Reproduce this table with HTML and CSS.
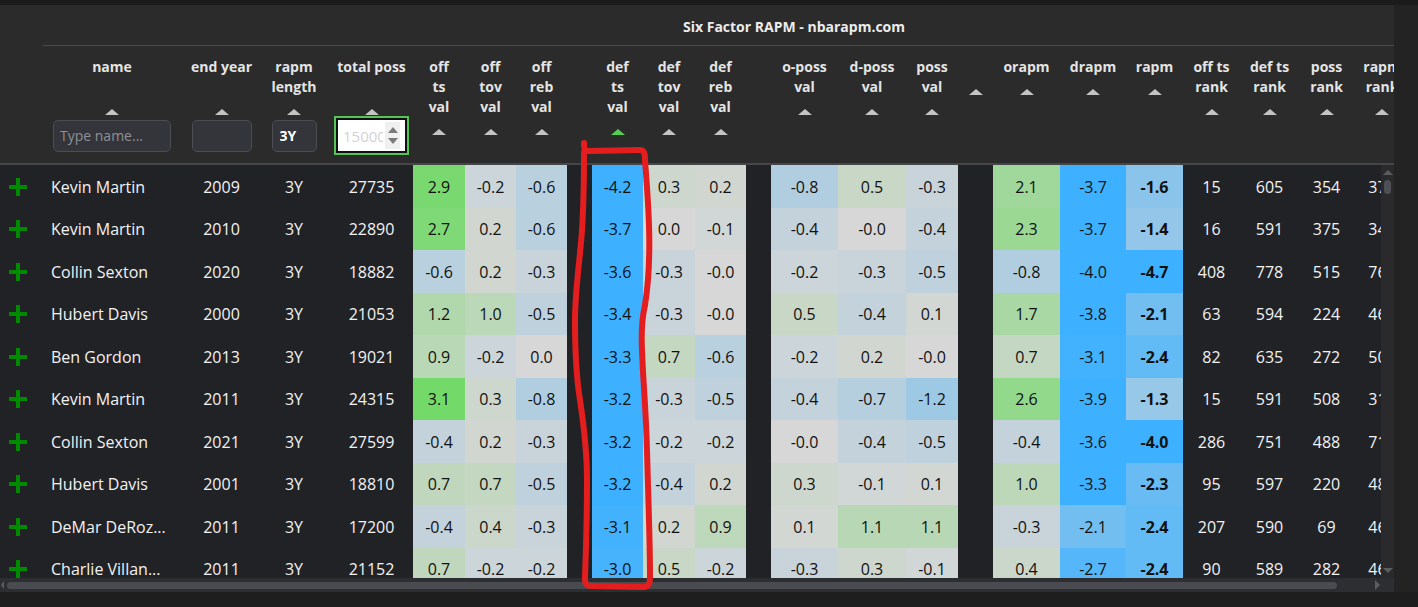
FILE: index.html
```html
<!DOCTYPE html>
<html lang="en">
<head>
<meta charset="utf-8">
<title>Six Factor RAPM - nbarapm.com</title>
<link rel="stylesheet" href="styles.css">
</head>
<body>
<div class="topbar"></div>
<div class="app">
  <main class="panel">
    <div class="title">Six Factor RAPM - nbarapm.com</div>
    <div class="thead">
      <div class="thead-clip">
        <div class="grid hrow">
          <div class="th th-plus"></div>
          <div class="th th-name"><div class="lbl two">name</div><span class="sort"></span><div class="slot"><input class="filter f-name" type="text" placeholder="Type name..."></div></div>
          <div class="th"><div class="lbl two">end year</div><span class="sort"></span><div class="slot"><input class="filter f-year" type="text"></div></div>
          <div class="th"><div class="lbl">rapm<br>length</div><span class="sort"></span><div class="slot"><input class="filter f-len" type="text" value="3Y"></div></div>
          <div class="th"><div class="lbl two">total poss</div><span class="sort"></span><div class="slot"><div class="numbox"><div class="numbox-in"><input class="num-input" type="text" placeholder="15000"><span class="spin"><i class="up"></i><i class="down"></i></span></div></div></div></div>
          <div class="th"><div class="lbl">off<br>ts<br>val</div><span class="sort"></span></div>
          <div class="th"><div class="lbl">off<br>tov<br>val</div><span class="sort"></span></div>
          <div class="th"><div class="lbl">off<br>reb<br>val</div><span class="sort"></span></div>
          <div class="th"></div>
          <div class="th"><div class="lbl">def<br>ts<br>val</div><span class="sort active"></span></div>
          <div class="th"><div class="lbl">def<br>tov<br>val</div><span class="sort"></span></div>
          <div class="th"><div class="lbl">def<br>reb<br>val</div><span class="sort"></span></div>
          <div class="th"></div>
          <div class="th"><div class="lbl">o-poss<br>val</div><span class="sort"></span></div>
          <div class="th"><div class="lbl">d-poss<br>val</div><span class="sort"></span></div>
          <div class="th"><div class="lbl">poss<br>val</div><span class="sort"></span></div>
          <div class="th"><div class="lbl">&nbsp;</div><span class="sort"></span></div>
          <div class="th"><div class="lbl">orapm</div><span class="sort"></span></div>
          <div class="th"><div class="lbl">drapm</div><span class="sort"></span></div>
          <div class="th"><div class="lbl">rapm</div><span class="sort"></span></div>
          <div class="th"><div class="lbl">off ts<br>rank</div><span class="sort"></span></div>
          <div class="th"><div class="lbl">def ts<br>rank</div><span class="sort"></span></div>
          <div class="th"><div class="lbl">poss<br>rank</div><span class="sort"></span></div>
          <div class="th"><div class="lbl">rapm<br>rank</div><span class="sort"></span></div>
        </div>
      </div>
    </div>
    <div class="tbody">
      <div class="tbody-clip">
        <div id="rows" class="grid rows"></div>
      </div>
      <div class="vscroll">
        <i class="arr-up"></i>
        <span class="vthumb"></span>
        <span class="vspace"></span>
        <i class="arr-down"></i>
      </div>
    </div>
    <div class="hscroll">
      <i class="arr-left"></i>
      <span class="hthumb"></span>
      <span class="hspace"></span>
      <i class="arr-right"></i>
    </div>
  </main>
  <div class="gutter"></div>
</div>
<svg class="annot" width="1418" height="607" viewBox="0 0 1418 607" aria-hidden="true">
  <path d="M 584 143 C 584 148, 584 151, 589 151 L 640 150 C 644 150, 645 153, 645 160 C 646 175, 648 195, 649 225 C 650 255, 649 280, 645 305 C 642 318, 641 330, 642 350 C 643 380, 646 410, 647 450 C 648 490, 650 540, 650 575 C 650 584, 649 587, 643 587 L 592 586 C 586 586, 585 584, 585 578 C 586 550, 587 510, 587 480 C 587 450, 583 420, 580 400 C 576 375, 575 350, 575 320 C 575 290, 580 260, 582 230 C 584 200, 584 170, 584 152" />
</svg>
<script src="app.js"></script>
</body>
</html>
```

FILE: styles.css
```css
* { box-sizing: border-box; }

html, body {
  margin: 0;
  padding: 0;
}

body {
  width: 1418px;
  height: 607px;
  overflow: hidden;
  background: #1e1e1e;
  font-family: "Open Sans", "Noto Sans", "DejaVu Sans", sans-serif;
  position: relative;
}

.topbar {
  height: 5px;
  background: #1b1b1b;
}

.app {
  display: flex;
  height: 587px;
}

.panel {
  width: 1394px;
  height: 587px;
  background: #2b2b2b;
  display: flex;
  flex-direction: column;
}

.gutter {
  flex: 1;
  background: #232323;
}

.title {
  height: 40px;
  padding-top: 12px;
  padding-left: 194px;
  text-align: center;
  color: #ececec;
  font-weight: 700;
  font-size: 14px;
  line-height: 20px;
}

.grid {
  display: grid;
  grid-template-columns: 43px 142px 73px 72px 83px 52px 51px 51px 25px 51px 52px 51px 25px 67px 68px 52px 35px 67px 66px 57px 57px 59px 55px 56px;
  width: 1410px;
}

/* ---------- header ---------- */
.thead {
  height: 120px;
  border-bottom: 2px solid #45464a;
}

.thead-clip {
  width: 1394px;
  overflow: hidden;
}

.hrow {
  height: 118px;
}

.th {
  display: flex;
  flex-direction: column;
  align-items: center;
  padding-top: 11px;
  border-top: 1px solid #4a4a4a;
  color: #e4e4e4;
  font-weight: 700;
  font-size: 14px;
  line-height: 20px;
  text-align: center;
  white-space: nowrap;
}

.th-plus {
  border-top-color: transparent;
}

.th-name {
  padding-right: 4px;
}

.lbl.two {
  min-height: 40px;
}

.sort {
  display: block;
  width: 0;
  height: 0;
  margin-top: 12px;
  border-left: 7px solid transparent;
  border-right: 7px solid transparent;
  border-bottom: 6px solid #c4c4c4;
}

.sort.active {
  border-bottom-color: #52d052;
}

.slot {
  height: 39px;
  margin-top: 1px;
  display: flex;
  align-items: center;
}

.filter {
  height: 32px;
  background: #33353a;
  border: 1px solid #4b4d53;
  border-radius: 5px;
  color: #ffffff;
  font-family: "Open Sans", "Noto Sans", sans-serif;
  font-size: 14px;
  padding: 0 6px;
  outline: none;
}

.filter::placeholder {
  color: #8d9096;
}

.f-name { width: 118px; }
.f-year { width: 60px; }
.f-len {
  width: 45px;
  font-weight: 700;
  padding: 0 7px;
}

.numbox {
  width: 75px;
  height: 39px;
  border: 2px solid #56c456;
  display: flex;
}

.numbox-in {
  flex: 1;
  display: flex;
  align-items: center;
  background: #ffffff;
  border: 2px solid #111111;
  padding-left: 5px;
  overflow: hidden;
}

.num-input {
  width: 40px;
  min-width: 0;
  border: 0;
  padding: 0;
  background: transparent;
  font-family: "Open Sans", "Noto Sans", sans-serif;
  font-size: 15px;
  outline: none;
}

.num-input::placeholder {
  color: #d2d2d2;
}

.spin {
  width: 15px;
  height: 27px;
  margin-left: 2px;
  background: #f0f0f0;
  display: flex;
  flex-direction: column;
  align-items: center;
  justify-content: center;
  gap: 5px;
}

.spin i {
  display: block;
  width: 0;
  height: 0;
  border-left: 5px solid transparent;
  border-right: 5px solid transparent;
}

.spin .up { border-bottom: 6px solid #7a7a7a; }
.spin .down { border-top: 6px solid #7a7a7a; }

/* ---------- body ---------- */
.tbody {
  display: flex;
  height: 413px;
}

.tbody-clip {
  width: 1381px;
  height: 413px;
  overflow: hidden;
  background: #212226;
}

.rows {
  grid-auto-rows: 42.5px;
}

.td {
  display: flex;
  align-items: center;
  justify-content: center;
  padding-top: 1px;
  color: #f2f2f2;
  font-size: 16px;
  white-space: nowrap;
  overflow: hidden;
}

.td.plus {
  justify-content: flex-start;
  padding-left: 8px;
}

.td.name {
  justify-content: flex-start;
  padding-left: 8px;
}

.td.val {
  color: #111111;
}

.td.strong {
  font-weight: 700;
}

.plus-icon {
  display: block;
}

.vscroll {
  width: 13px;
  background: #2a2a2c;
  display: flex;
  flex-direction: column;
  align-items: center;
  padding: 5px 0 5px;
}

.vspace { flex: 1; }

.arr-up, .arr-down, .arr-left, .arr-right {
  display: block;
  width: 0;
  height: 0;
}

.arr-up {
  border-left: 5px solid transparent;
  border-right: 5px solid transparent;
  border-bottom: 5px solid #5b5c60;
}

.arr-down {
  border-left: 5px solid transparent;
  border-right: 5px solid transparent;
  border-top: 5px solid #5b5c60;
}

.vthumb {
  display: block;
  width: 7px;
  height: 14px;
  margin-top: 5px;
  border-radius: 4px;
  background: #4f5055;
}

.hscroll {
  height: 14px;
  background: #2d2e32;
  display: flex;
  align-items: center;
  padding: 0 14px 0 1px;
}

.arr-left {
  border-top: 4px solid transparent;
  border-bottom: 4px solid transparent;
  border-right: 3px solid #5b5c60;
}

.arr-right {
  border-top: 5px solid transparent;
  border-bottom: 5px solid transparent;
  border-left: 5px solid #5b5c60;
}

.hthumb {
  display: block;
  width: 1330px;
  height: 7px;
  margin-left: 3px;
  border-radius: 4px;
  background: #4a4b50;
}

.hspace { flex: 1; }

/* ---------- annotation ---------- */
.annot {
  position: absolute;
  left: 0;
  top: 0;
  pointer-events: none;
}

.annot path {
  fill: none;
  stroke: #e41e1e;
  stroke-width: 6;
  stroke-linecap: round;
  stroke-linejoin: round;
}
```

FILE: app.js
```js
(function () {
  var data = [
    ["Kevin Martin", "2009", "3Y", "27735", ["2.9", "-0.2", "-0.6"], ["-4.2", "0.3", "0.2"], ["-0.8", "0.5", "-0.3"], ["2.1", "-3.7", "-1.6"], ["15", "605", "354", "372"]],
    ["Kevin Martin", "2010", "3Y", "22890", ["2.7", "0.2", "-0.6"], ["-3.7", "0.0", "-0.1"], ["-0.4", "-0.0", "-0.4"], ["2.3", "-3.7", "-1.4"], ["16", "591", "375", "348"]],
    ["Collin Sexton", "2020", "3Y", "18882", ["-0.6", "0.2", "-0.3"], ["-3.6", "-0.3", "-0.0"], ["-0.2", "-0.3", "-0.5"], ["-0.8", "-4.0", "-4.7"], ["408", "778", "515", "768"]],
    ["Hubert Davis", "2000", "3Y", "21053", ["1.2", "1.0", "-0.5"], ["-3.4", "-0.3", "-0.0"], ["0.5", "-0.4", "0.1"], ["1.7", "-3.8", "-2.1"], ["63", "594", "224", "466"]],
    ["Ben Gordon", "2013", "3Y", "19021", ["0.9", "-0.2", "0.0"], ["-3.3", "0.7", "-0.6"], ["-0.2", "0.2", "-0.0"], ["0.7", "-3.1", "-2.4"], ["82", "635", "272", "500"]],
    ["Kevin Martin", "2011", "3Y", "24315", ["3.1", "0.3", "-0.8"], ["-3.2", "-0.3", "-0.5"], ["-0.4", "-0.7", "-1.2"], ["2.6", "-3.9", "-1.3"], ["15", "591", "508", "311"]],
    ["Collin Sexton", "2021", "3Y", "27599", ["-0.4", "0.2", "-0.3"], ["-3.2", "-0.2", "-0.2"], ["-0.0", "-0.4", "-0.5"], ["-0.4", "-3.6", "-4.0"], ["286", "751", "488", "711"]],
    ["Hubert Davis", "2001", "3Y", "18810", ["0.7", "0.7", "-0.5"], ["-3.2", "-0.4", "0.2"], ["0.3", "-0.1", "0.1"], ["1.0", "-3.3", "-2.3"], ["95", "597", "220", "486"]],
    ["DeMar DeRoz...", "2011", "3Y", "17200", ["-0.4", "0.4", "-0.3"], ["-3.1", "0.2", "0.9"], ["0.1", "1.1", "1.1"], ["-0.3", "-2.1", "-2.4"], ["207", "590", "69", "466"]],
    ["Charlie Villan...", "2011", "3Y", "21152", ["0.7", "-0.2", "-0.2"], ["-3.0", "0.5", "-0.2"], ["-0.3", "0.3", "-0.1"], ["0.4", "-2.7", "-2.4"], ["90", "589", "282", "466"]]
  ];

  function colour(str, kg) {
    var v = parseFloat(str);
    var r, g, b;
    if (v > 0) {
      var t = Math.min(v, 5);
      r = 214 - kg * t;
      g = 215 + 0.6 * t;
      b = 214 - 1.1 * kg * t;
    } else {
      var u = Math.min(-v, 3.2) / 3.2;
      r = 214 - 153 * u;
      g = 215 - 38 * u;
      b = 214 + 41 * u;
    }
    return "rgb(" + Math.round(r) + "," + Math.round(g) + "," + Math.round(b) + ")";
  }

  var plusSvg = '<svg class="plus-icon" width="20" height="20" viewBox="0 0 20 20"><path d="M10 1V19M1 10H19" stroke="#008a00" stroke-width="4"/></svg>';

  var html = "";
  function cell(cls, text, bg) {
    html += '<div class="td ' + cls + '"' + (bg ? ' style="background:' + bg + '"' : "") + ">" + text + "</div>";
  }

  data.forEach(function (row) {
    cell("plus", plusSvg);
    cell("name", row[0]);
    cell("", row[1]);
    cell("", row[2]);
    cell("", row[3]);
    row[4].forEach(function (v, i) { cell("val", v, colour(v, i === 0 ? 32 : 27)); });
    cell("", "");
    row[5].forEach(function (v) { cell("val", v, colour(v, 27)); });
    cell("", "");
    row[6].forEach(function (v) { cell("val", v, colour(v, 27)); });
    cell("", "");
    cell("val", row[7][0], colour(row[7][0], 26));
    cell("val", row[7][1], colour(row[7][1], 26));
    cell("val strong", row[7][2], colour(row[7][2], 26));
    row[8].forEach(function (v) { cell("", v); });
  });

  document.getElementById("rows").innerHTML = html;
})();
```
